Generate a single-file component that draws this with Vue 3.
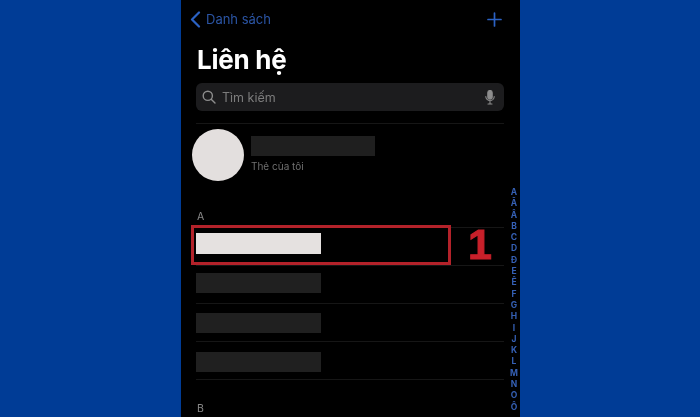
<script setup>
// blocks drift a little inside their rows in the reference
const rows = [
  { id: 1, light: true, offset: 5 },
  { id: 2, light: false, offset: 7 },
  { id: 3, light: false, offset: 9 },
  { id: 4, light: false, offset: 10 },
]

const letters = ['A', 'Ă', 'Â', 'B', 'C', 'D', 'Đ', 'E', 'Ê', 'F', 'G', 'H', 'I', 'J', 'K', 'L', 'M', 'N', 'O', 'Ô']
</script>

<template>
  <div class="page">
    <div class="phone">
      <div class="nav">
        <div class="back">
          <svg width="11" height="17" viewBox="0 0 11 17" fill="none" stroke="#2b62c4" stroke-width="2.2" stroke-linecap="round" stroke-linejoin="round">
            <path d="M9 1.5 2 8.5l7 7"></path>
          </svg>
          <span>Danh sách</span>
        </div>
        <svg width="15" height="15" viewBox="0 0 15 15" fill="none" stroke="#2b62c4" stroke-width="1.7" stroke-linecap="round">
          <path d="M7.5 1v13M1 7.5h13"></path>
        </svg>
      </div>

      <h1 class="title">Liên hệ</h1>

      <div class="search">
        <svg width="14" height="14" viewBox="0 0 14 14" fill="none" stroke="#8d8d8d" stroke-width="1.4" stroke-linecap="round">
          <circle cx="5.8" cy="5.8" r="4.6"></circle>
          <path d="m9.2 9.2 3.8 3.8"></path>
        </svg>
        <span class="search-text">Tìm kiếm</span>
        <svg class="mic" width="10" height="15" viewBox="0 0 10 15" fill="none" stroke="#8d8d8d" stroke-width="1.1" stroke-linecap="round">
          <rect x="2.8" y="0.5" width="4.4" height="8.6" rx="2.2" fill="#8d8d8d"></rect>
          <path d="M0.8 6.5a4.2 4.2 0 0 0 8.4 0M5 10.8v3M3 14h4"></path>
        </svg>
      </div>

      <div class="me">
        <div class="avatar"></div>
        <div class="me-info">
          <div class="me-name"></div>
          <div class="me-sub">Thẻ của tôi</div>
        </div>
      </div>

      <div class="section-label first">A</div>
      <div class="list">
        <div v-for="row in rows" :key="row.id" class="row" :style="{ paddingTop: row.offset + 'px' }">
          <div :class="['block', { light: row.light }]"></div>
        </div>
      </div>

      <div class="section-label second">B</div>

      <div class="highlight"></div>
      <div class="step">1</div>

      <div class="index">
        <span v-for="letter in letters" :key="letter">{{ letter }}</span>
      </div>
    </div>
  </div>
</template>

<style>
html, body {
  margin: 0;
  background: #003c96;
}
</style>

<style scoped>
.page {
  width: 700px;
  height: 417px;
  background: #003c96;
  overflow: hidden;
}

.phone {
  position: relative;
  width: 339px;
  height: 417px;
  margin-left: 181px;
  background: #000;
  overflow: hidden;
  font-family: Inter, "Liberation Sans", sans-serif;
  filter: blur(0.3px);
}

.nav {
  display: flex;
  justify-content: space-between;
  align-items: center;
  height: 18px;
  padding: 10px 18px 0 9px;
}

.back {
  display: flex;
  align-items: center;
  gap: 5px;
  color: #2b55a5;
  font-size: 13px;
}

.title {
  margin: 16px 0 0 16px;
  color: #fff;
  font-size: 26px;
  line-height: 32px;
  font-weight: 700;
  letter-spacing: -0.25px;
}

.search {
  display: flex;
  align-items: center;
  gap: 6px;
  height: 28px;
  margin: 7px 16px 0 15px;
  padding: 0 9px 0 6px;
  background: #1c1c1e;
  border-radius: 6px;
}

.search-text {
  color: #7c7c7c;
  font-size: 12.5px;
}

.mic {
  margin-left: auto;
}

.me {
  display: flex;
  gap: 7px;
  height: 53px;
  margin-top: 18px;
  padding-left: 11px;
  position: relative;
}

.me::before {
  content: "";
  position: absolute;
  left: 15px;
  right: 16px;
  top: -6px;
  height: 1px;
  background: #161616;
}

.avatar {
  width: 52px;
  height: 52px;
  border-radius: 50%;
  background: #e3dfde;
}

.me-info {
  padding-top: 7px;
}

.me-name {
  width: 124px;
  height: 20px;
  background: #1f1f1f;
}

.me-sub {
  margin-top: 3px;
  color: #6f6f6f;
  font-size: 10px;
  line-height: 14px;
}

.section-label {
  margin-left: 16px;
  color: #8a8a8a;
  font-size: 10.5px;
  line-height: 12px;
}

.first {
  margin-top: 29px;
}

.second {
  margin-top: 23px;
}

.list {
  margin: 4px 16px 0 15px;
  border-top: 1px solid #161616;
}

.row {
  height: 38px;
  box-sizing: border-box;
  border-bottom: 1px solid #161616;
}

.block {
  width: 125px;
  height: 20px;
  background: #202020;
}

.block.light {
  height: 21px;
  background: #e5e1e0;
}

.highlight {
  position: absolute;
  left: 10px;
  top: 225px;
  width: 254px;
  height: 34px;
  border: 3px solid #b3222a;
}

.step {
  position: absolute;
  left: 287px;
  top: 221px;
  color: #c8202a;
  font-family: "Liberation Sans", sans-serif;
  font-size: 43px;
  line-height: 46px;
  font-weight: 700;
  -webkit-text-stroke: 1px #c8202a;
}

.index {
  position: absolute;
  right: 0;
  top: 187px;
  width: 12px;
  display: flex;
  flex-direction: column;
  align-items: center;
  color: #3560b5;
  font-size: 8.5px;
  line-height: 11.3px;
  font-weight: 700;
}
</style>
